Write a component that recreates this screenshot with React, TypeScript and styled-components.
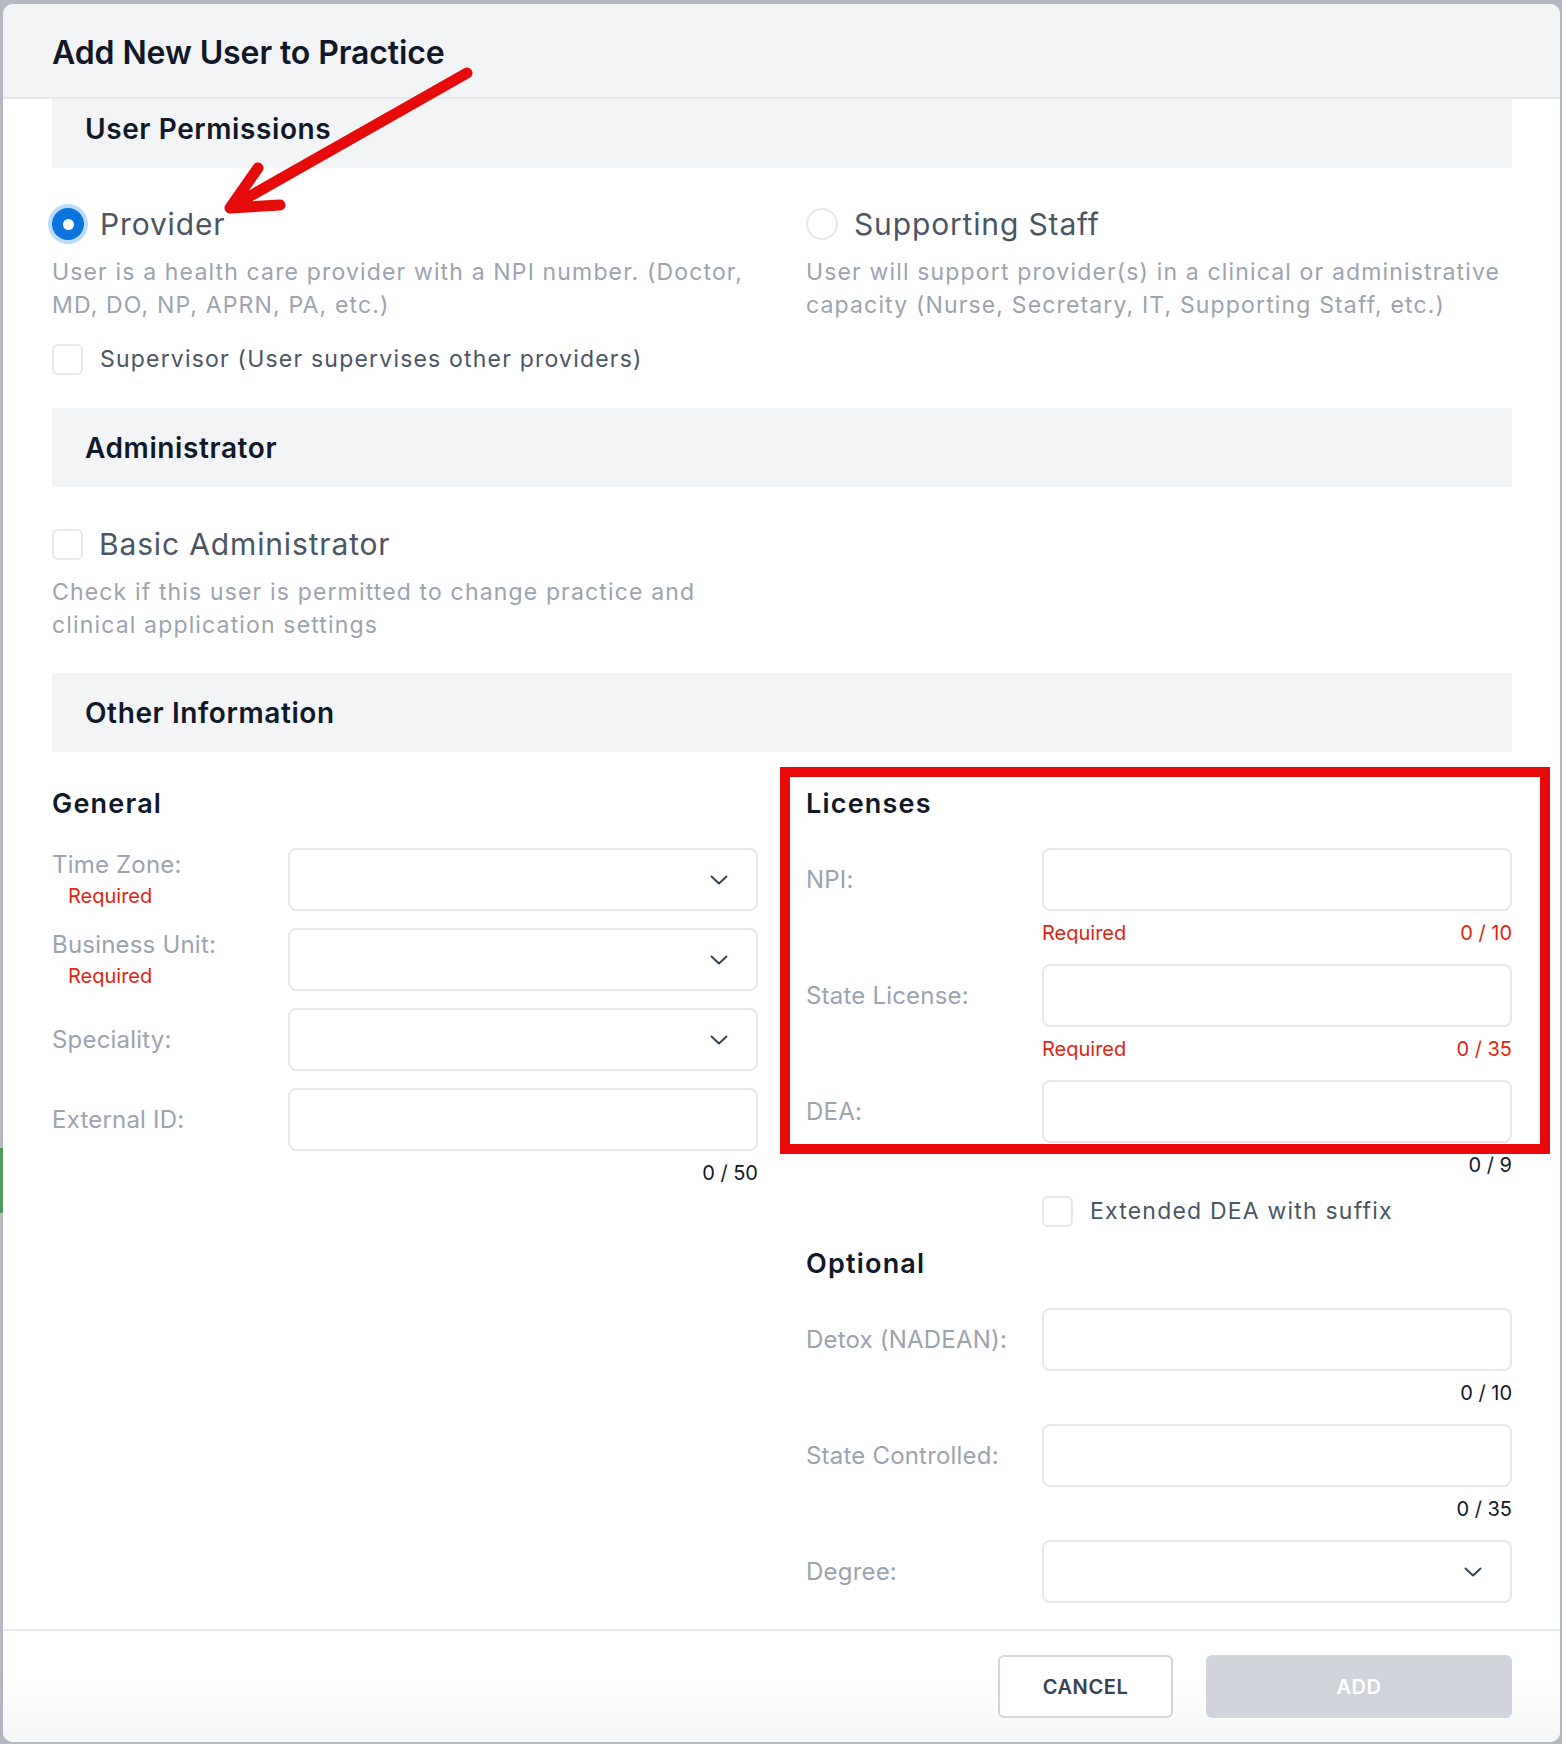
import React from "react";
import styled, { createGlobalStyle } from "styled-components";

const GlobalStyle = createGlobalStyle`
  html, body {
    margin: 0;
    padding: 0;
  }
  body {
    background: #b3b8c1;
    font-family: Inter, "Noto Sans", "Liberation Sans", sans-serif;
  }
  * {
    box-sizing: border-box;
  }
`;

const Page = styled.div`
  position: relative;
  width: 1562px;
  height: 1744px;
  padding: 4px 2px 2px 3px;
  overflow: hidden;
`;

const BackdropMark = styled.div`
  position: absolute;
  left: 0;
  top: 1148px;
  width: 3px;
  height: 65px;
  background: #4f9a5c;
`;

const Modal = styled.div`
  position: relative;
  height: 100%;
  background: #ffffff;
  border-radius: 10px;
  display: flex;
  flex-direction: column;
  overflow: hidden;
`;

const Header = styled.div`
  flex: none;
  height: 95px;
  background: #f3f4f6;
  border-bottom: 2px solid #e5e7eb;
  padding: 3px 49px 0;
  display: flex;
  align-items: center;
`;

const Title = styled.h1`
  margin: 0;
  font-size: 32px;
  font-weight: 600;
  color: #111827;
  letter-spacing: -0.1px;
`;

const Body = styled.div`
  flex: 1;
  overflow: hidden;
  padding: 0 48px 0 49px;
`;

// content is scrolled a few pixels, so the first band sits partly under the header
const Scroller = styled.div`
  margin-top: -10px;
`;

const Band = styled.div<{ $top?: number }>`
  height: 79px;
  margin-top: ${(p) => p.$top ?? 0}px;
  background: #f3f4f6;
  display: flex;
  align-items: center;
  padding-left: 33px;
  font-size: 28px;
  font-weight: 600;
  color: #111827;
  letter-spacing: 0.6px;
`;

const TwoCols = styled.div<{ $top: number }>`
  display: grid;
  grid-template-columns: 1fr 1fr;
  column-gap: 48px;
  margin-top: ${(p) => p.$top}px;
`;

const OptionRow = styled.div`
  display: flex;
  align-items: center;
  gap: 16px;
`;

const Radio = styled.span<{ $on?: boolean }>`
  flex: none;
  width: 32px;
  height: 32px;
  border-radius: 50%;
  background: ${(p) => (p.$on ? "#0b74de" : "#ffffff")};
  border: ${(p) => (p.$on ? "none" : "2px solid #e5e7eb")};
  box-shadow: ${(p) => (p.$on ? "0 0 0 4px #bcdcfd" : "none")};
  display: flex;
  align-items: center;
  justify-content: center;
  &::after {
    content: "";
    display: ${(p) => (p.$on ? "block" : "none")};
    width: 11px;
    height: 11px;
    border-radius: 50%;
    background: #ffffff;
  }
`;

const Checkbox = styled.span`
  flex: none;
  width: 31px;
  height: 31px;
  border: 2px solid #e5e7eb;
  border-radius: 6px;
  background: #ffffff;
`;

const BigLabel = styled.span`
  font-size: 30px;
  line-height: 36px;
  color: #4b5563;
  letter-spacing: 0.85px;
`;

const CheckText = styled.span`
  font-size: 23px;
  line-height: 31px;
  color: #4b5563;
  letter-spacing: 1.2px;
`;

const Desc = styled.p<{ $top: number }>`
  margin: ${(p) => p.$top}px 0 0;
  font-size: 23px;
  line-height: 32.5px;
  color: #9ca3af;
  letter-spacing: 1.15px;
`;

const CheckLine = styled.div<{ $top: number }>`
  display: flex;
  align-items: center;
  gap: 17px;
  margin-top: ${(p) => p.$top}px;
`;

const Column = styled.div`
  display: flex;
  flex-direction: column;
`;

const Heading = styled.h3`
  margin: 0 0 26px;
  font-size: 27px;
  line-height: 36px;
  font-weight: 600;
  color: #111827;
  letter-spacing: 1.2px;
`;

const FieldRow = styled.div<{ $after?: number }>`
  display: grid;
  grid-template-columns: 236px 1fr;
  margin-bottom: ${(p) => p.$after ?? 17}px;
`;

const LabelCell = styled.div`
  align-self: center;
  display: flex;
  flex-direction: column;
  gap: 2px;
`;

const Label = styled.span`
  font-size: 24px;
  line-height: 30px;
  color: #9ca3af;
  letter-spacing: 0.2px;
`;

const RequiredNote = styled.span`
  padding-left: 16px;
  font-size: 20px;
  line-height: 28px;
  color: #e0240f;
`;

const Box = styled.div`
  height: 63px;
  border: 2px solid #e5e7eb;
  border-radius: 8px;
  background: #ffffff;
  display: flex;
  align-items: center;
  justify-content: flex-end;
  padding-right: 28px;
`;

const Helper = styled.div<{ $error?: boolean }>`
  grid-column: 2;
  display: flex;
  justify-content: space-between;
  padding-top: 8px;
  font-size: 20px;
  line-height: 28px;
  color: ${(p) => (p.$error ? "#e0240f" : "#111827")};
`;

const Footer = styled.div`
  flex: none;
  height: 113px;
  border-top: 2px solid #e5e7eb;
  background: linear-gradient(#ffffff 40%, #f6f6f7);
  display: flex;
  justify-content: flex-end;
  align-items: center;
  gap: 33px;
  padding-right: 48px;
`;

const Button = styled.button<{ $primary?: boolean }>`
  height: 63px;
  width: ${(p) => (p.$primary ? 306 : 175)}px;
  border-radius: 6px;
  border: ${(p) => (p.$primary ? "none" : "2px solid #d1d5db")};
  background: ${(p) => (p.$primary ? "#d1d5db" : "#ffffff")};
  color: ${(p) => (p.$primary ? "#ffffff" : "#374151")};
  font-family: inherit;
  font-size: 20px;
  font-weight: 600;
  letter-spacing: 0.6px;
`;

const RedFrame = styled.div`
  position: absolute;
  left: 780px;
  top: 767px;
  width: 770px;
  height: 387px;
  border: 10px solid #e80a0a;
  pointer-events: none;
`;

const ArrowLayer = styled.svg`
  position: absolute;
  left: 0;
  top: 0;
  pointer-events: none;
`;

function Chevron() {
  return (
    <svg width="18" height="10" viewBox="0 0 18 10" fill="none">
      <path d="M1.5 1.5 L9 8.5 L16.5 1.5" stroke="#374151" strokeWidth="2" strokeLinecap="round" strokeLinejoin="round" />
    </svg>
  );
}

type Field = {
  label: string;
  required?: boolean;
  select?: boolean;
  count?: string;
  error?: boolean;
};

function FormField({ f }: { f: Field }) {
  const inlineRequired = f.required && !f.count;
  return (
    <FieldRow>
      <LabelCell>
        <Label>{f.label}</Label>
        {inlineRequired && <RequiredNote>Required</RequiredNote>}
      </LabelCell>
      <Box>{f.select && <Chevron />}</Box>
      {f.count && (
        <Helper $error={f.error}>
          <span>{f.error ? "Required" : ""}</span>
          <span>{f.count}</span>
        </Helper>
      )}
    </FieldRow>
  );
}

const general: Field[] = [
  { label: "Time Zone:", required: true, select: true },
  { label: "Business Unit:", required: true, select: true },
  { label: "Speciality:", select: true },
  { label: "External ID:", count: "0 / 50" },
];

const licenses: Field[] = [
  { label: "NPI:", count: "0 / 10", error: true },
  { label: "State License:", count: "0 / 35", error: true },
  { label: "DEA:", count: "0 / 9" },
];

const optional: Field[] = [
  { label: "Detox (NADEAN):", count: "0 / 10" },
  { label: "State Controlled:", count: "0 / 35" },
  { label: "Degree:", select: true },
];

export default function App() {
  return (
    <Page>
      <GlobalStyle />
      <BackdropMark />
      <Modal>
        <Header>
          <Title>Add New User to Practice</Title>
        </Header>
        <Body>
          <Scroller>
            <Band>User Permissions</Band>
            <TwoCols $top={38}>
              <div>
                <OptionRow>
                  <Radio $on />
                  <BigLabel>Provider</BigLabel>
                </OptionRow>
                <Desc $top={14}>
                  User is a health care provider with a NPI number. (Doctor, MD, DO, NP, APRN, PA, etc.)
                </Desc>
                <CheckLine $top={23}>
                  <Checkbox />
                  <CheckText>Supervisor (User supervises other providers)</CheckText>
                </CheckLine>
              </div>
              <div>
                <OptionRow>
                  <Radio />
                  <BigLabel>Supporting Staff</BigLabel>
                </OptionRow>
                <Desc $top={14}>
                  User will support provider(s) in a clinical or administrative capacity (Nurse, Secretary, IT,
                  Supporting Staff, etc.)
                </Desc>
              </div>
            </TwoCols>

            <Band $top={33}>Administrator</Band>
            <TwoCols $top={39}>
              <div>
                <OptionRow>
                  <Checkbox />
                  <BigLabel>Basic Administrator</BigLabel>
                </OptionRow>
                <Desc $top={14}>
                  Check if this user is permitted to change practice and clinical application settings
                </Desc>
              </div>
            </TwoCols>

            <Band $top={32}>Other Information</Band>
            <TwoCols $top={34}>
              <Column>
                <Heading>General</Heading>
                {general.map((f) => (
                  <FormField key={f.label} f={f} />
                ))}
              </Column>
              <Column>
                <Heading>Licenses</Heading>
                {licenses.map((f) => (
                  <FormField key={f.label} f={f} />
                ))}
                <FieldRow $after={19}>
                  <span />
                  <CheckLine $top={0}>
                    <Checkbox />
                    <CheckText>Extended DEA with suffix</CheckText>
                  </CheckLine>
                </FieldRow>
                <Heading>Optional</Heading>
                {optional.map((f) => (
                  <FormField key={f.label} f={f} />
                ))}
              </Column>
            </TwoCols>
          </Scroller>
        </Body>
        <Footer>
          <Button>CANCEL</Button>
          <Button $primary>ADD</Button>
        </Footer>
      </Modal>
      <RedFrame />
      <ArrowLayer width="520" height="260" viewBox="0 0 520 260">
        <path
          d="M467 73 L238 203 M258 168 L230 208 L280 205"
          stroke="#e50b0b"
          strokeWidth="11"
          strokeLinecap="round"
          strokeLinejoin="round"
          fill="none"
        />
      </ArrowLayer>
    </Page>
  );
}
